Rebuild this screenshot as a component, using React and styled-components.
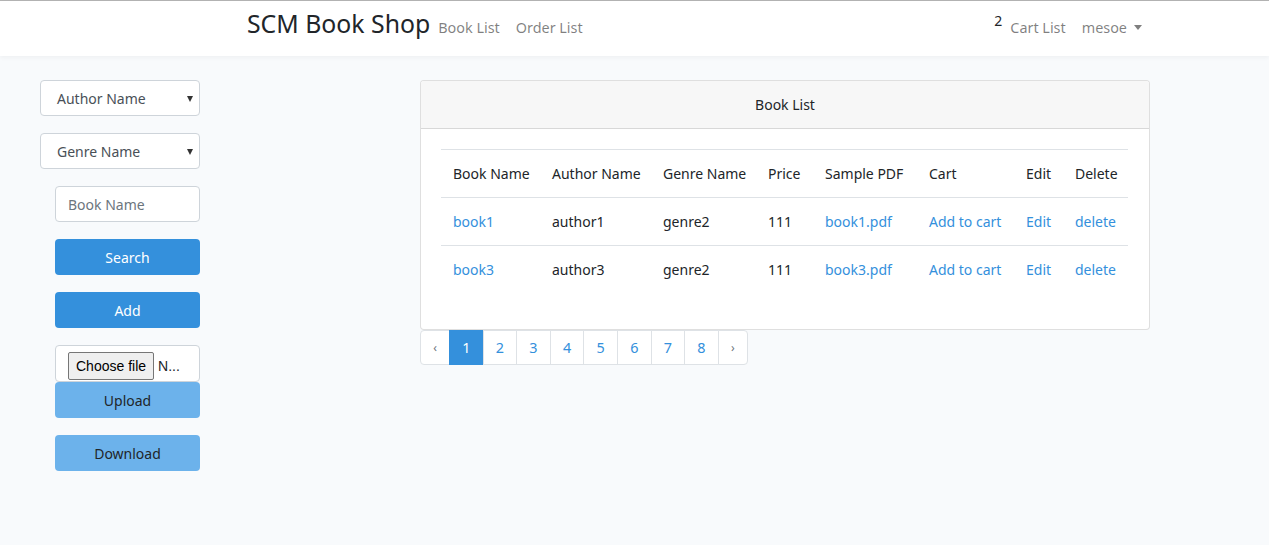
import React from "react";
import styled, { createGlobalStyle } from "styled-components";

const Global = createGlobalStyle`
  html, body { margin: 0; padding: 0; }
  body {
    background: #f8fafc;
    font-family: "Noto Sans", "Open Sans", sans-serif;
    font-size: 14px;
    line-height: 23px;
    color: #212529;
  }
  * { box-sizing: border-box; }
`;

const Page = styled.div`
  min-height: 545px;
  border-top: 1px solid #b3b3b3;
`;

const Navbar = styled.nav`
  height: 55px;
  background: #fff;
  box-shadow: 0 2px 4px rgba(0, 0, 0, 0.04);
  display: flex;
  align-items: center;
`;

const NavInner = styled.div`
  margin-left: 247px;
  width: 903px;
  display: flex;
  align-items: baseline;
  justify-content: space-between;
  margin-top: -9px;
`;

const NavGroup = styled.div`
  display: flex;
  align-items: baseline;
`;

const Brand = styled.span`
  font-size: 24.8px;
  line-height: 1.2;
  color: #212529;
`;

const NavLink = styled.a`
  color: rgba(0, 0, 0, 0.5);
  font-size: 14.4px;
  padding: 0 8px;
  text-decoration: none;
`;

const Badge = styled.sup`
  font-size: 14px;
  color: #212529;
  position: relative;
  top: -7px;
`;

const Caret = styled.span`
  display: inline-block;
  margin-left: 7px;
  vertical-align: 3px;
  border-top: 5px solid rgba(0, 0, 0, 0.5);
  border-left: 4.5px solid transparent;
  border-right: 4.5px solid transparent;
`;

const Main = styled.main`
  display: flex;
  align-items: flex-start;
  padding: 24px 0 0 40px;
  gap: 220px;
`;

const Sidebar = styled.aside`
  width: 160px;
  display: flex;
  flex-direction: column;
  align-items: flex-end;
`;

const SelectBox = styled.div`
  width: 160px;
  height: 36px;
  background: #fff;
  border: 1px solid #ced4da;
  border-radius: 4px;
  display: flex;
  align-items: center;
  justify-content: space-between;
  padding: 0 6px 0 16px;
  color: #495057;
  margin-bottom: 17px;
`;

const SelectArrow = styled.span`
  width: 0;
  height: 0;
  border-top: 6px solid #333;
  border-left: 3.5px solid transparent;
  border-right: 3.5px solid transparent;
  margin-top: 1px;
`;

const TextInput = styled.input`
  width: 145px;
  height: 36px;
  border: 1px solid #ced4da;
  border-radius: 4px;
  padding: 0 12px;
  font: inherit;
  color: #495057;
  background: #fff;
  margin-bottom: 17px;
  &::placeholder { color: #6c757d; }
`;

const Button = styled.button`
  width: 145px;
  height: 36px;
  border: none;
  border-radius: 4px;
  font: inherit;
  background: ${(p) => (p.$light ? "#6cb2eb" : "#3490dc")};
  color: ${(p) => (p.$light ? "#212529" : "#fff")};
  margin-bottom: 17px;
  cursor: pointer;
`;

const FileBox = styled.div`
  width: 145px;
  height: 37px;
  background: #fff;
  border: 1px solid #ced4da;
  border-radius: 4px;
  display: flex;
  align-items: center;
  padding-left: 12px;
  gap: 4px;
  overflow: hidden;
  white-space: nowrap;
`;

const FileButton = styled.span`
  font-family: "Liberation Sans", Arial, sans-serif;
  font-size: 14px;
  line-height: 1;
  color: #000;
  background: #efefef;
  border: 1px solid #767676;
  border-radius: 2px;
  padding: 6px 7px 6px 7px;
  margin-top: 5px;
`;

const FileName = styled.span`
  font-family: "Liberation Sans", Arial, sans-serif;
  font-size: 14px;
  color: #212529;
  margin-top: 5px;
`;

const Content = styled.section`
  width: 730px;
`;

const Card = styled.div`
  background: #fff;
  border: 1px solid rgba(0, 0, 0, 0.125);
  border-radius: 4px;
  overflow: hidden;
`;

const CardHeader = styled.div`
  background: #f7f7f7;
  border-bottom: 1px solid rgba(0, 0, 0, 0.125);
  padding: 12px 20px;
  text-align: center;
`;

const CardBody = styled.div`
  padding: 20px;
`;

const Table = styled.table`
  width: 687px;
  border-collapse: collapse;
  margin-bottom: 16px;
  table-layout: fixed;
`;

const Th = styled.th`
  width: ${(p) => p.$w}px;
  text-align: left;
  font-weight: 400;
  padding: 12px;
  border-top: 1px solid #dee2e6;
  white-space: nowrap;
`;

const Td = styled.td`
  padding: 12px;
  border-top: 1px solid #dee2e6;
  white-space: nowrap;
`;

const Link = styled.a`
  color: #3490dc;
  text-decoration: none;
`;

const Pager = styled.ul`
  display: flex;
  list-style: none;
  margin: 0;
  padding: 0;
`;

const PageItem = styled.li`
  width: ${(p) => (p.$arrow ? 30 : 34.6)}px;
  height: 35px;
  display: flex;
  align-items: center;
  justify-content: center;
  background: ${(p) => (p.$active ? "#3490dc" : "#fff")};
  color: ${(p) => (p.$active ? "#fff" : p.$arrow ? "#6c757d" : "#3490dc")};
  border: 1px solid ${(p) => (p.$active ? "#3490dc" : "#dee2e6")};
  margin-left: -1px;
  font-size: ${(p) => (p.$arrow ? "12px" : "14.4px")};
  &:first-child {
    margin-left: 0;
    border-radius: 4px 0 0 4px;
  }
  &:last-child {
    border-radius: 0 4px 4px 0;
  }
`;

const cols = [
  ["Book Name", 99],
  ["Author Name", 111],
  ["Genre Name", 105],
  ["Price", 57],
  ["Sample PDF", 104],
  ["Cart", 97],
  ["Edit", 49],
  ["Delete", 65],
];

const rows = [
  { book: "book1", author: "author1", genre: "genre2", price: "111" },
  { book: "book3", author: "author3", genre: "genre2", price: "111" },
];

export default function App() {
  return (
    <Page>
      <Global />
      <Navbar>
        <NavInner>
          <NavGroup>
            <Brand>SCM Book Shop</Brand>
            <NavLink>Book List</NavLink>
            <NavLink>Order List</NavLink>
          </NavGroup>
          <NavGroup>
            <Badge>2</Badge>
            <NavLink>Cart List</NavLink>
            <NavLink>
              mesoe
              <Caret />
            </NavLink>
          </NavGroup>
        </NavInner>
      </Navbar>
      <Main>
        <Sidebar>
          <SelectBox>
            <span>Author Name</span>
            <SelectArrow />
          </SelectBox>
          <SelectBox>
            <span>Genre Name</span>
            <SelectArrow />
          </SelectBox>
          <TextInput placeholder="Book Name" />
          <Button>Search</Button>
          <Button>Add</Button>
          <FileBox>
            <FileButton>Choose file</FileButton>
            <FileName>N...</FileName>
          </FileBox>
          <Button $light>Upload</Button>
          <Button $light>Download</Button>
        </Sidebar>
        <Content>
          <Card>
            <CardHeader>Book List</CardHeader>
            <CardBody>
              <Table>
                <thead>
                  <tr>
                    {cols.map(([c, w]) => (
                      <Th key={c} $w={w}>
                        {c}
                      </Th>
                    ))}
                  </tr>
                </thead>
                <tbody>
                  {rows.map((r) => (
                    <tr key={r.book}>
                      <Td><Link>{r.book}</Link></Td>
                      <Td>{r.author}</Td>
                      <Td>{r.genre}</Td>
                      <Td>{r.price}</Td>
                      <Td><Link>{r.book}.pdf</Link></Td>
                      <Td><Link>Add to cart</Link></Td>
                      <Td><Link>Edit</Link></Td>
                      <Td><Link>delete</Link></Td>
                    </tr>
                  ))}
                </tbody>
              </Table>
            </CardBody>
          </Card>
          <Pager>
            <PageItem $arrow>‹</PageItem>
            {[1, 2, 3, 4, 5, 6, 7, 8].map((n) => (
              <PageItem key={n} $active={n === 1}>
                {n}
              </PageItem>
            ))}
            <PageItem $arrow>›</PageItem>
          </Pager>
        </Content>
      </Main>
    </Page>
  );
}
